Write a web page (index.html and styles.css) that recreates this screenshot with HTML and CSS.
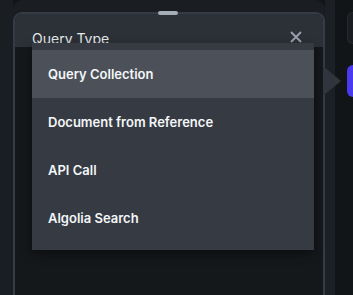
FILE: index.html
```html
<!DOCTYPE html>
<html lang="en">
<head>
  <meta charset="UTF-8">
  <title>Query Type</title>
  <link rel="stylesheet" href="styles.css">
</head>
<body>
  <div class="page">
    <div class="gutter"></div>
    <div class="panel">
      <div class="handle"></div>
      <div class="hd">
        <span class="title">Query Type</span>
        <span class="close">
          <svg width="12" height="12" viewBox="0 0 12 12"><path d="M1 1 L11 11 M11 1 L1 11" stroke="#9aa3ad" stroke-width="1.8" fill="none"/></svg>
        </span>
      </div>
      <div class="bd"></div>
      <ul class="menu">
        <li class="current">Query Collection</li>
        <li>Document from Reference</li>
        <li>API Call</li>
        <li>Algolia Search</li>
      </ul>
      <div class="pointer"></div>
    </div>
    <div class="strip"></div>
    <div class="side">
      <div class="side-top"></div>
      <div class="side-btn"></div>
    </div>
  </div>
</body>
</html>
```
FILE: styles.css
```css
html,
body {
  margin: 0;
  padding: 0;
}

body {
  background-color: #121518;
  font-family: Inter, "Noto Sans", sans-serif;
}

.page {
  display: flex;
  width: 353px;
  height: 295px;
  overflow: hidden;
}

.gutter {
  width: 13px;
  background-color: #1a1d21;
}

.panel {
  position: relative;
  width: 312px;
  margin-top: 12px;
  box-sizing: border-box;
  border: 2px solid #363c45;
  border-bottom: none;
  border-radius: 9px 9px 0 0;
  background-color: #15181b;
  display: flex;
  flex-direction: column;
  box-shadow: 0 -12px 0 0 #1a1d21;
}

.handle {
  position: absolute;
  top: -3px;
  left: 143px;
  width: 20px;
  height: 4px;
  border-radius: 2px;
  background-color: #a4adb6;
}

.hd {
  height: 33px;
  background-color: #2c3138;
  border-radius: 7px 7px 0 0;
  display: flex;
  align-items: flex-start;
  justify-content: space-between;
  padding: 16px 21px 0 17px;
  box-sizing: border-box;
}

.title {
  color: #e6e9ec;
  font-size: 14px;
  line-height: 18px;
}

.close {
  display: block;
  width: 12px;
  height: 12px;
  margin-top: 1px;
}

.close svg {
  display: block;
}

.bd {
  flex: 1;
}

.menu {
  position: absolute;
  top: 29px;
  left: 17px;
  width: 282px;
  margin: 0;
  padding: 7px 0 8px;
  list-style: none;
  background-color: #353a43;
  box-shadow: 0 4px 10px rgba(0, 0, 0, 0.45);
}

.menu li {
  height: 48px;
  line-height: 48px;
  padding-left: 16px;
  color: #f4f6f8;
  font-size: 13px;
  font-weight: 600;
}

.menu li.current {
  background-color: #4b5059;
}

.pointer {
  position: absolute;
  top: 52px;
  right: -18px;
  width: 0;
  height: 0;
  border-top: 15px solid transparent;
  border-bottom: 15px solid transparent;
  border-left: 18px solid #30353d;
}

.strip {
  width: 10px;
  background-color: #1c1f23;
}

.side {
  flex: 1;
  display: flex;
  flex-direction: column;
  padding-left: 12px;
}

.side-top {
  margin-top: 12px;
  height: 30px;
  border: 1px solid #262a30;
  border-right: none;
  border-radius: 6px 0 0 6px;
  background-color: #1a1d21;
}

.side-btn {
  margin-top: 21px;
  height: 32px;
  border-radius: 6px 0 0 6px;
  background-color: #4b39ef;
}
```
